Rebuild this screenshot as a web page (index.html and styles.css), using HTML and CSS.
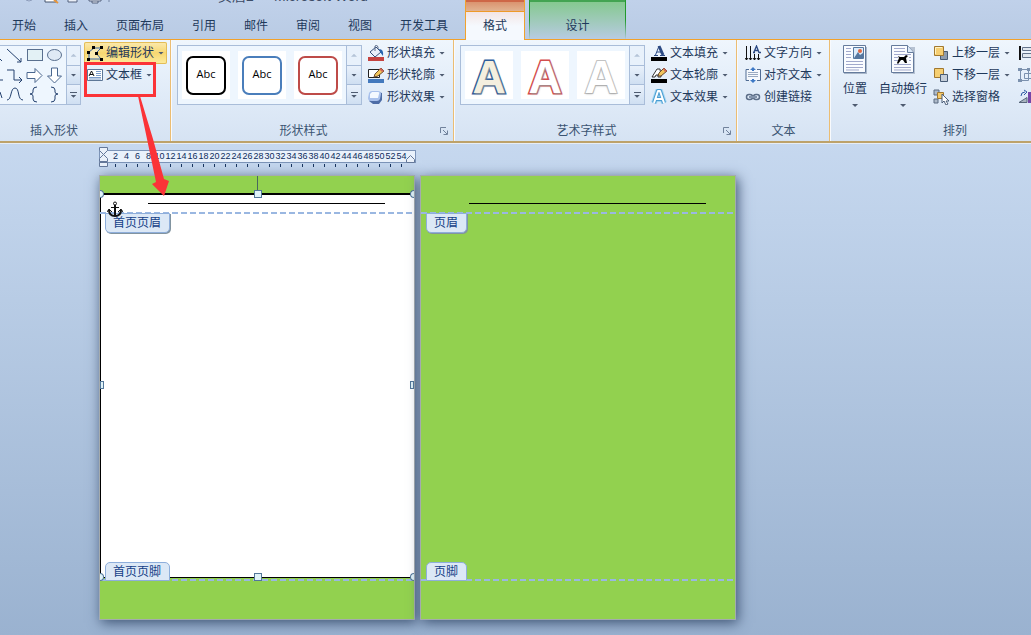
FILE: index.html
```html
<!DOCTYPE html>
<html lang="zh-CN">
<head>
<meta charset="utf-8">
<title>页眉2 - Microsoft Word</title>
<link rel="stylesheet" href="styles.css">
</head>
<body>
<div class="app">
  <header class="top">
    <div class="titlebar">
      <svg class="quick" width="112" height="5" viewBox="0 0 112 5"><path d="M26 0q3 2 6 0" fill="none" stroke="#8d9dbb"/><path d="M45 0v2h11V0" fill="#fff" stroke="#44546f"/><path d="M54 0l4 3" stroke="#e8963c" stroke-width="2"/><path d="M68 0v2h9V0M89 0v1h12V0M92 1v2h6V1" fill="#e9eef6" stroke="#52617c"/><path d="M109 0v2" stroke="#7586a3"/></svg>
      <div class="title">页眉2 &nbsp;- &nbsp;Microsoft Word</div>
    </div>
    <nav class="tabs">
      <button class="tab">开始</button>
      <button class="tab">插入</button>
      <button class="tab">页面布局</button>
      <button class="tab">引用</button>
      <button class="tab">邮件</button>
      <button class="tab">审阅</button>
      <button class="tab">视图</button>
      <button class="tab">开发工具</button>
      <div class="context drawing"><span class="context-name"></span><button class="tab active">格式</button></div>
      <div class="context design"><span class="context-name"></span><button class="tab">设计</button></div>
    </nav>
  </header>

  <section class="ribbon">
    <div class="group shapes">
      <div class="tools">
        <div class="gallery">
          <svg width="66" height="57" viewBox="0 0 66 57" fill="none" stroke="#24416f"><path d="M0 13l2 2M7 3l14 13M21 12v4h-4"/><rect x="27.500" y="3.500" width="15" height="11" fill="#e3f1f5" stroke="#5a708f"/><ellipse cx="54.500" cy="9" rx="7" ry="5.500" fill="#dfeaf5" stroke="#5a708f"/><path d="M0 34h3M7 24h7v10h8M19 31l3 3-3 3"/><path d="M27 26.500h8v-4l7 7-7 7v-4h-8zM51.500 22h6v8h4l-7 7-7-7h4z" fill="#fff" stroke="#4a678f"/><path d="M0 46l2 6M7 54c5 0 3-12 8-12s2 12 8 12M37 41q-4 0-4 3v2q0 2-3 2 3 0 3 2v3q0 3 4 3M51 41q4 0 4 3v2q0 2 3 2-3 0-3 2v3q0 3-4 3"/></svg>
          <div class="scroll"><button class="off" aria-label="上一行"><i class="up"></i></button><button aria-label="下一行"><i class="down"></i></button><button aria-label="更多"><i class="line"></i><i class="down"></i></button></div>
        </div>
        <div class="commands">
          <button class="cmd hot"><svg width="16" height="16" viewBox="0 0 16 16"><path d="M2 13V7l5-4h7l-5 5 5 6H2" fill="#f8e9b0" stroke="#3464a8"/><path d="M0 6h3v3H0zM5 1h3v3H5zM13 1h3v3h-3zM8 7h3v3H8zM0 13h3v3H0zM13 13h3v3h-3z"/></svg><span>编辑形状</span><i class="down"></i></button>
          <button class="cmd"><svg width="16" height="16" viewBox="0 0 16 16"><path d="M.5 2.500h15v11H.5z" fill="#fff" stroke="#5d7797"/><path d="M2 9L4.500 4 7 9M3 7.500h3" fill="none" stroke="#111"/><path d="M9 4.500h5M9 6.500h5M9 8.500h5M2 10.500h12M2 12h12" stroke="#7c9cc8"/></svg><span>文本框</span><i class="down"></i></button>
        </div>
      </div>
      <div class="caption"><span>插入形状</span></div>
    </div>

    <div class="group">
      <div class="tools">
        <div class="gallery">
          <div class="tiles"><button class="tile"><span class="abc black">Abc</span></button><button class="tile"><span class="abc blue">Abc</span></button><button class="tile"><span class="abc red">Abc</span></button></div>
          <div class="scroll"><button class="off" aria-label="上一行"><i class="up"></i></button><button aria-label="下一行"><i class="down"></i></button><button aria-label="更多"><i class="line"></i><i class="down"></i></button></div>
        </div>
        <div class="commands">
          <button class="cmd"><svg width="16" height="16" viewBox="0 0 16 16"><path d="M0 12h16v4H0z" fill="#c54340"/><path d="M2 7l6-5 5 5-6 5z" fill="#e9f0fa" stroke="#364f78"/><path d="M7 6V1q2-2 3 1v2" fill="none" stroke="#5c6d8a"/><path d="M11 4q5 0 4 7l-3-4z" fill="#2763ae"/></svg><span>形状填充</span><i class="down"></i></button>
          <button class="cmd"><svg width="16" height="16" viewBox="0 0 16 16"><path d="M0 12h16v4H0z" fill="#4379bd"/><path d="M.5 2.500h11v8H.5z" fill="#fff" stroke="#222"/><path d="M6 10l1-3 6-6 3 3-6 5z" fill="#f3c65a" stroke="#6b4b2e"/><path d="M13 1l3 3-2 1-3-3z" fill="#cf665a"/></svg><span>形状轮廓</span><i class="down"></i></button>
          <button class="cmd"><svg width="16" height="16" viewBox="0 0 16 16"><path d="M11 3l3 1v7l-3 4H5l-4-3z" fill="#4d6ca6"/><path d="M4 2h6q3 0 3 3l-1 5q-1 2-3 2H3q-3 0-3-3l1-5q1-2 3-2z" fill="#a9c1ec"/><path d="M4 3h6q2 0 1 2l-1 4H2V5z" fill="#f4f9ff"/></svg><span>形状效果</span><i class="down"></i></button>
        </div>
      </div>
      <div class="caption"><span>形状样式</span><button class="launcher" aria-label="形状样式选项"><svg width="8" height="8" viewBox="0 0 8 8" fill="none" stroke="#71829c"><path d="M.5 6V.5H6M3 3l4 4M7.500 3.500v4h-4"/></svg></button></div>
    </div>

    <div class="group">
      <div class="tools">
        <div class="gallery">
          <div class="tiles"><button class="tile art cream">A</button><button class="tile art rose">A</button><button class="tile art gray">A</button></div>
          <div class="scroll"><button class="off" aria-label="上一行"><i class="up"></i></button><button aria-label="下一行"><i class="down"></i></button><button aria-label="更多"><i class="line"></i><i class="down"></i></button></div>
        </div>
        <div class="commands">
          <button class="cmd"><svg width="16" height="16" viewBox="0 0 16 16"><path d="M0 12h16v4H0z"/><path d="M3 10.500h4M9 10.500h5M4.500 10L8 1M6 7h5" fill="none" stroke="#2d4b84"/><path d="M8 1l4 9" stroke="#2d4b84" stroke-width="3"/></svg><span>文本填充</span><i class="down"></i></button>
          <button class="cmd"><svg width="16" height="16" viewBox="0 0 16 16"><path d="M0 12h16v4H0z"/><path d="M1 10l5-8h3l1 8H7V8H5l-1 2z" fill="#fff" stroke="#333"/><path d="M7 9l1-3 5-5 3 3-6 5z" fill="#f1c45d" stroke="#6b4b2e"/><path d="M13 1l3 3-2 1-2-3z" fill="#cf665a"/></svg><span>文本轮廓</span><i class="down"></i></button>
          <button class="cmd"><svg width="16" height="16" viewBox="0 0 16 16" fill="none" stroke-linejoin="round"><path d="M3 14L7 2h2l4 12M5 10h6" stroke="#a5d8f3" stroke-width="6"/><path d="M3 14L7 2h2l4 12M5 10h6" stroke="#4b9dd2" stroke-width="4"/><path d="M3 14L7 2h2l4 12M5 10h6" stroke="#fff" stroke-width="2"/></svg><span>文本效果</span><i class="down"></i></button>
        </div>
      </div>
      <div class="caption"><span>艺术字样式</span><button class="launcher" aria-label="艺术字样式选项"><svg width="8" height="8" viewBox="0 0 8 8" fill="none" stroke="#71829c"><path d="M.5 6V.5H6M3 3l4 4M7.500 3.500v4h-4"/></svg></button></div>
    </div>

    <div class="group text">
      <div class="tools">
        <div class="commands">
          <button class="cmd"><svg width="16" height="16" viewBox="0 0 16 16" fill="none" stroke="#111"><path d="M1.500 1v14M0 13l1.500 2L3 13M5.500 1v14M4 13l1.500 2L7 13M9.500 9v6M8 13l1.500 2 1.500-2M13.500 9v6M12 13l1.500 2 1.500-2"/><path d="M8 7.500h2M9 7l2.500-6L14 7.500h2M10 5.500h3" stroke="#2c4a83" stroke-width="1.300"/></svg><span>文字方向</span><i class="down"></i></button>
          <button class="cmd"><svg width="16" height="16" viewBox="0 0 16 16"><path d="M1 2.500h14.500v11H1z" fill="#f5f9fd"/><path d="M4 2.500H1v11h3M12 2.500h3.500v11H12" fill="none" stroke="#506c94"/><path d="M3 5.500h10M3 7.500h10M3 9.500h10" stroke="#9aaac1"/><path d="M8 0l3 3H9v1H7V3H5zM8 16l3-3H9v-1H7v1H5z" fill="#3d79c6"/></svg><span>对齐文本</span><i class="down"></i></button>
          <button class="cmd"><svg width="16" height="16" viewBox="0 0 16 16" fill="none"><rect x="1.500" y="5.500" width="6" height="5" rx="2.500" stroke="#5c6e88" stroke-width="1.500"/><rect x="8.500" y="5.500" width="6" height="5" rx="2.500" stroke="#5c6e88" stroke-width="1.500"/><path d="M4 8h8" stroke="#8394ac" stroke-width="2"/></svg><span>创建链接</span></button>
        </div>
      </div>
      <div class="caption"><span>文本</span></div>
    </div>

    <div class="group arrange">
      <div class="tools">
        <button class="big"><svg width="26" height="32" viewBox="0 0 26 32"><path d="M2 3h23v27H2z" fill="#a9b7ca"/><path d="M1.500 1.500h22v27h-22z" fill="#fafcff" stroke="#657b9c"/><path d="M4 4.500h5M4 7.500h5M4 10.500h5M4 13.500h5M4 17.500h17M4 20.500h17M4 23.500h17M4 26h13" stroke="#a1a9cc"/><path d="M11.500 3.500h10v11h-10z" fill="#dcecfb" stroke="#56789f"/><path d="M12 14l4-6 2 3 3-2v5z" fill="#56779f"/><circle cx="18" cy="7" r="2" fill="#df6843"/></svg><span>位置</span><i class="down"></i></button>
        <button class="big"><svg width="26" height="32" viewBox="0 0 26 32"><path d="M3 3h22v27H3z" fill="#b6c2d2"/><path d="M1.500 1.500h16l6 7v20h-22z" fill="#fafcff" stroke="#657b9c"/><path d="M17.500 1.500v7h6" fill="#dbe8f7" stroke="#657b9c"/><path d="M4 4.500h11M4 7.500h11M4 10.500h17M4 13.500h4M4 16.500h4M19 13.500h2M19 16.500h2M4 20.500h17M4 23.500h17M4 26h17" stroke="#a1a9cc"/><path d="M8 12l2 1h4l2-2 2 1-2 2 1 5h-2l-2-3h-2l-3 4-1-1 2-5z"/></svg><span>自动换行</span><i class="down"></i></button>
        <div class="commands">
          <button class="cmd"><svg width="16" height="16" viewBox="0 0 16 16"><path d="M7.500 6.500h7v8h-7z" fill="#8d9cae" stroke="#465a74"/><path d="M1.500 1.500h9v9h-9z" fill="#f6cf72" stroke="#a17830"/><path d="M2.500 9V2.500H9" fill="none" stroke="#fff3c2"/></svg><span>上移一层</span><i class="down"></i></button>
          <button class="cmd"><svg width="16" height="16" viewBox="0 0 16 16"><path d="M1.500 1.500h9v9h-9z" fill="#f6cf72" stroke="#a17830"/><path d="M7.500 7.500h7v7h-7z" fill="#c5ced9" stroke="#465a74"/></svg><span>下移一层</span><i class="down"></i></button>
          <button class="cmd"><svg width="16" height="16" viewBox="0 0 16 16"><path d="M1 1h5v5H1zM1 10h4v4H1z" fill="#aebac9" stroke="#5b6b80"/><path d="M4.500 3.500h6v6h-6z" fill="#f5ca6b" stroke="#a17830"/><path d="M9 5v9l2-2 2 4 2-1-2-3h3z" fill="#fff" stroke="#4b5e79"/></svg><span>选择窗格</span></button>
        </div>
        <div class="commands">
          <button class="cmd" aria-label="对齐"><svg width="16" height="16" viewBox="0 0 16 16"><path d="M2 1v14" stroke="#111" stroke-width="2"/><path d="M4.500 2.500h11v3h-11zM4.500 8.500h11v4h-11z" fill="#e1e8ef" stroke="#64748b"/></svg></button>
          <button class="cmd" aria-label="组合"><svg width="16" height="16" viewBox="0 0 16 16" fill="none" stroke="#7b91ae"><path d="M2.500 2.500h8v11h-8zM6.500 6.500h9v5h-9z"/><path d="M0 1h4v3H0zM0 12h4v3H0zM9 1h3v3H9z" fill="#7b91ae" stroke="none"/></svg></button>
          <button class="cmd" aria-label="旋转"><svg width="16" height="16" viewBox="0 0 16 16"><path d="M1 13.500h8v-5z" fill="#a8b4c0" stroke="#57677a"/><path d="M10 3h6v11h-6z" fill="#7546a7"/><path d="M3 7q0-4 4-4M6 1l3 2-3 3" fill="none" stroke="#2e5ba3"/></svg></button>
        </div>
      </div>
      <div class="caption"><span>排列</span></div>
    </div>
  </section>

  <main class="workspace">
    <div class="ruler">
      <div class="scale"><span>2</span><span>4</span><span>6</span><span>8</span><span>10</span><span>12</span><span>14</span><span>16</span><span>18</span><span>20</span><span>22</span><span>24</span><span>26</span><span>28</span><span>30</span><span>32</span><span>34</span><span>36</span><span>38</span><span>40</span><span>42</span><span>44</span><span>46</span><span>48</span><span>50</span><span>52</span><span>54</span></div>
      <svg class="indent" width="10" height="21" viewBox="0 0 10 21" fill="#eaf1fa" stroke="#64789a"><path d="M.5.500h8v3l-4 4-4-4zM.5 14.500v-3l4-4 4 4v3zM.5 15.500h8v4h-8z"/></svg>
      <svg class="indent-right" width="10" height="9" viewBox="0 0 10 9" fill="#eaf1fa" stroke="#64789a"><path d="M.5 8.500v-3l4-4 4 4v3z"/></svg>
    </div>
    <div class="pages">
      <article class="page">
        <div class="textbox"></div>
        <div class="rule"></div>
        <div class="guide head"></div><div class="tag head">首页页眉</div>
        <div class="guide foot"></div><div class="tag foot">首页页脚</div>
        <i class="stem"></i>
        <i class="handle n"></i><i class="handle s"></i><i class="handle w"></i><i class="handle e"></i>
        <i class="handle round nw"></i><i class="handle round ne"></i><i class="handle round sw"></i><i class="handle round se"></i>
        <svg class="anchor" width="16" height="17" viewBox="0 0 16 17" fill="none" stroke="#111"><path d="M8 4v11" stroke-width="2"/><circle cx="8" cy="2.500" r="1.500" fill="#fff"/><path d="M4 6.500h8"/><path d="M2 9q0 6 6 6t6-6" stroke-width="2"/><path d="M0 11l2-3 3 3M11 11l3-3 2 3"/></svg>
      </article>
      <article class="page">
        <div class="rule"></div>
        <div class="guide head"></div><div class="tag head">页眉</div>
        <div class="guide foot"></div><div class="tag foot">页脚</div>
      </article>
    </div>
  </main>

  <svg class="callout" width="90" height="140" viewBox="0 0 90 140"><path d="M1.500 3.500h69v32h-69z" fill="none" stroke="#fb3337" stroke-width="3"/><path d="M54 36h2l13 43 11 40 5 2-5 15-12-12 4-2-9-43z" fill="#fb3337"/></svg>
</div>
</body>
</html>
```

FILE: styles.css
```css
* { box-sizing: border-box; }
body {
  margin: 0;
  font: 12px/16px "Liberation Sans", "Noto Sans CJK SC", sans-serif;
  color: #1e395b;
}
button {
  margin: 0;
  padding: 0;
  border: 0;
  background: none;
  font: inherit;
  color: inherit;
  white-space: nowrap;
}
svg { display: block; flex: none; }
.app {
  position: relative;
  display: flex;
  flex-direction: column;
  min-height: 100vh;
  overflow: hidden;
}

.top { background: linear-gradient(#c0d1ea, #b9cbe4); }
.titlebar { height: 12px; display: flex; overflow: hidden; }
.title {
  margin: -13px 0 0 106px;
  font-size: 14px;
  line-height: 18px;
  color: #3c4c67;
}
.tabs { display: flex; height: 28px; padding-left: 12px; gap: 28px; }
.tab { line-height: 26px; }
.context {
  display: flex;
  flex-direction: column;
  margin-top: -12px;
  border: solid #f0a22e;
  border-width: 0 1px;
}
.context-name { height: 12px; flex: none; }
.context .tab { flex: 1; }
.drawing {
  width: 60px;
  margin-left: -11px;
  z-index: 2;
  background: linear-gradient(#d98c68, #e2b795 12px, #f4f5fa 13px);
}
.drawing .context-name { border-top: 2px solid #ce6747; border-bottom: 1px solid #ee9a28; }
.active { background: linear-gradient(#f3e5e5, #f5f9fe 14px); }
.design {
  width: 97px;
  margin-left: -24px;
  border-color: transparent;
  background: linear-gradient(#83c98c, #b9cbe4) padding-box, linear-gradient(#22992c 20px, #b9cbe4) border-box;
}
.design .context-name { border-top: 2px solid #43a452; }

.ribbon {
  position: relative;
  z-index: 1;
  display: flex;
  flex: none;
  height: 104px;
  margin-top: -1px;
  border-top: 1px solid #f2a12a;
  border-bottom: 2px solid #bda26a;
  background: linear-gradient(#eff6fd, #e0ebf8 55px, #d6e3f3);
  box-shadow: 0 1px #e7edf5;
  overflow: hidden;
}
.group {
  flex: none;
  display: flex;
  flex-direction: column;
  padding: 0 5px 0 6px;
  border-right: 1px solid #ebbd73;
}
.group + .group { box-shadow: inset 1px 0 #f8fafd; }
.shapes { padding: 0 3px 0 0; }
.text { padding: 0 4px 0 5px; }
.arrange { width: 248px; padding-left: 8px; }
.tools { display: flex; gap: 3px; height: 83px; padding-top: 2px; }
.arrange .tools { gap: 2px; }
.commands { display: flex; flex-direction: column; align-items: flex-start; }
.cmd {
  display: flex;
  align-items: center;
  gap: 3px;
  height: 22px;
  padding: 0 3px;
}
.cmd .down { margin-left: 1px; }
.hot {
  border-radius: 2px;
  background: linear-gradient(#fbeab0, #f7d771 50%, #fcec9f);
  box-shadow: inset 0 0 0 1px #e3bd58;
}
.down, .up {
  width: 6px;
  height: 3px;
  background: #4e5b70;
  clip-path: polygon(0 0, 100% 0, 50% 100%);
}
.up { clip-path: polygon(50% 0, 100% 100%, 0 100%); background: #b5c4d8; }
.line { width: 7px; height: 1px; background: #4e5b70; }
.gallery {
  display: flex;
  height: 60px;
  margin-top: 3px;
  border: 1px solid #a9bdd9;
  background: #eef6fe;
}
.shapes .gallery { border-left: 0; }
.shapes .scroll { width: 14px; }
.tiles { display: flex; gap: 8px; padding: 5px 4px; }
.tile {
  display: flex;
  align-items: center;
  justify-content: center;
  width: 48px;
  height: 48px;
  background: #fff;
}
.scroll { display: flex; flex-direction: column; width: 15px; border-left: 1px solid #a9bdd9; }
.scroll button {
  flex: 1;
  display: flex;
  flex-direction: column;
  align-items: center;
  justify-content: center;
  gap: 2px;
  background: linear-gradient(#e9f1fb, #cfdff2);
  border-top: 1px solid #a9bdd9;
}
.scroll .off { background: #e8f1fb; border-top: 0; }
.abc {
  width: 40px;
  height: 39px;
  border: 2px solid;
  border-radius: 7px;
  font: 11px/32px "Open Sans", sans-serif;
  color: #000;
}
.black { border-color: #000; }
.blue { border-color: #4a7ebb; }
.red { border-color: #be4b48; }
.art {
  font: bold 46px/48px "Liberation Sans", sans-serif;
  padding-top: 4px;
  paint-order: stroke fill;
}
.cream { color: #f4efdf; -webkit-text-stroke: 3px #2c5d9d; text-shadow: 1px 1px 2px #999; }
.rose { color: #fff; -webkit-text-stroke: 3px #d64b4b; text-shadow: 1px 1px 2px #999; }
.gray { color: #fff; -webkit-text-stroke: 2px #c4c4c4; text-shadow: 0 1px 2px #aaa; }
.big {
  display: flex;
  flex-direction: column;
  align-items: center;
  width: 34px;
  padding-top: 2px;
}
.big span { margin: 5px 0 7px; }
.big + .big { width: 50px; margin-left: 4px; }
.caption { display: flex; align-items: center; height: 16px; color: #3b5472; }
.caption span { flex: 1; text-align: center; }
.shapes .caption { padding-right: 59px; }
.launcher { display: flex; justify-content: flex-end; width: 18px; }

.workspace {
  flex: 1;
  padding: 7px 0 16px 99px;
  background: linear-gradient(#c6d8ef, #9ab2d0);
}
.ruler { position: relative; width: 317px; height: 25px; margin-top: -1px; }
.scale {
  display: flex;
  height: 13px;
  margin-top: 1px;
  padding: 0 8px 0 10px;
  border: 1px solid #7c94b8;
  background: #e9f1fb;
}
.scale span {
  flex: 1 0 0;
  display: flex;
  flex-direction: column;
  align-items: center;
  font-size: 9px;
  line-height: 11px;
  color: #0d2c5c;
}
.scale span::after { content: ""; width: 1px; height: 3px; margin-top: 2px; flex: none; background: #17345f; }
.indent { position: absolute; left: 0; top: -3px; }
.indent-right { position: absolute; right: 0; top: 4px; }
.pages { display: flex; gap: 5px; }
.page {
  position: relative;
  flex: none;
  width: 316px;
  height: 445px;
  border: 1px solid #a4abae;
  background: #92d14f;
  box-shadow: 2px 3px 12px #3f5575;
}
.textbox {
  position: absolute;
  inset: 17px 0 41px;
  border: solid #000;
  border-width: 2px 0 1px 1px;
  background: #fff;
}
.rule { position: absolute; left: 48px; right: 29px; top: 27px; height: 1px; background: #000; }
.guide {
  position: absolute;
  left: 0;
  right: 0;
  height: 2px;
  background: repeating-linear-gradient(90deg, #9ab7e1 0 6px, transparent 6px 9px);
}
.guide.head { top: 36px; }
.guide.foot { bottom: 38px; }
.tag {
  position: absolute;
  left: 5px;
  padding: 0 8px 0 7px;
  border: 1px solid #8eaedb;
  background: #dce8f6;
  color: #153f87;
  line-height: 18px;
}
.tag.head { top: 37px; border-radius: 0 0 5px 5px; box-shadow: 1px 1px #8294a0; }
.tag.foot { bottom: 38px; height: 19px; border-radius: 5px 5px 0 0; }
.stem { position: absolute; left: 157px; top: 0; width: 1px; height: 15px; background: #48685e; }
.handle {
  position: absolute;
  width: 8px;
  height: 8px;
  border: 1px solid #537799;
  background: #e0f3f8;
}
.n, .s { left: 154px; }
.n, .nw, .ne { top: 14px; }
.s, .sw, .se { bottom: 38px; }
.w, .e { top: 205px; }
.w { left: 0; width: 4px; }
.e { right: 0; width: 4px; }
.nw, .sw { left: 0; }
.ne, .se { right: 0; }
.round { width: 4px; }
.nw, .sw { border-left: 0; border-radius: 0 4px 4px 0; }
.ne, .se { border-right: 0; border-radius: 4px 0 0 4px; }
.anchor { position: absolute; left: 7px; top: 25px; }
.callout { position: absolute; left: 84px; top: 60px; z-index: 3; pointer-events: none; }
```
